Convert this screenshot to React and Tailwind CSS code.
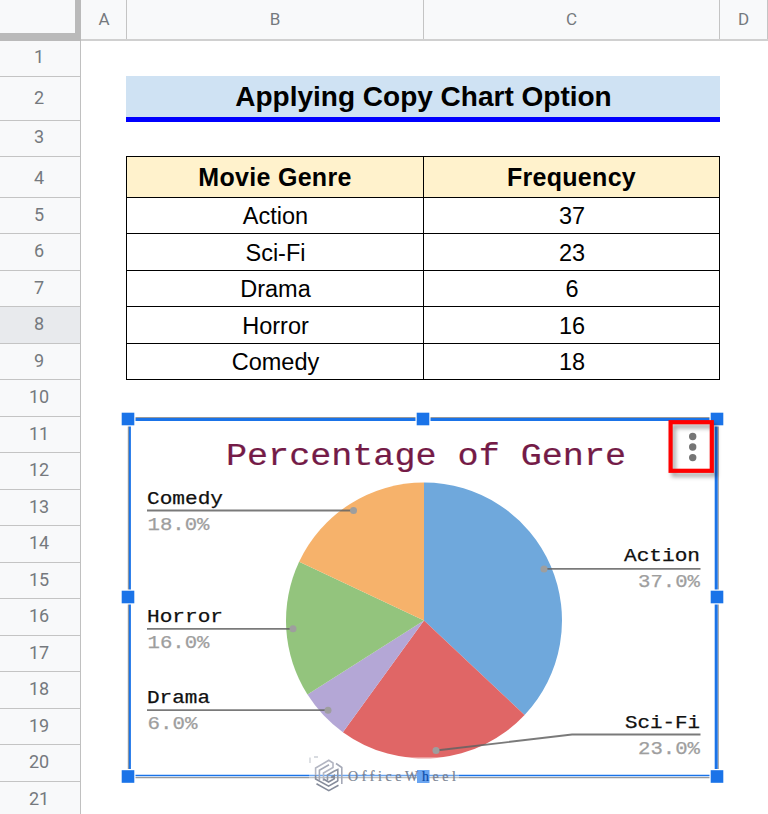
const rowHeights = [36, 44, 36, 41, 36, 37, 36, 37, 36, 37, 36, 37, 36, 37, 36, 37, 36, 37, 36, 37, 36];

const data = [
  ["Action", "37"],
  ["Sci-Fi", "23"],
  ["Drama", "6"],
  ["Horror", "16"],
  ["Comedy", "18"],
];

const bodyHeights = ["h-[36px]", "h-[37px]", "h-[36px]", "h-[37px]", "h-[36px]"];

const slices = [
  { from: 0, to: 37, color: "#6fa8dc" },
  { from: 37, to: 60, color: "#e06666" },
  { from: 60, to: 66, color: "#b4a7d6" },
  { from: 66, to: 82, color: "#93c47d" },
  { from: 82, to: 100, color: "#f6b26b" },
];

const CX = 424;
const CY = 620.5;
const R = 138;

function point(p) {
  const a = (p / 100) * Math.PI * 2;
  return `${CX + R * Math.sin(a)} ${CY - R * Math.cos(a)}`;
}

function slicePath({ from, to }) {
  return `M${CX} ${CY}L${point(from)}A${R} ${R} 0 0 1 ${point(to)}Z`;
}

const labels = [
  { name: "Comedy", pct: "18.0%", x: 147, y: 504, w: 76, pw: 62, line: "147,510.5 353,510.5", dot: [353.5, 510.5] },
  { name: "Horror", pct: "16.0%", x: 147, y: 622, w: 76, pw: 62, line: "147,628.8 293,628.8", dot: [293, 628.8] },
  { name: "Drama", pct: "6.0%", x: 147, y: 703.5, w: 63, pw: 50, line: "147,710.2 328,710.2", dot: [328, 710.2] },
  { name: "Action", pct: "37.0%", end: 701, x: 624, y: 561.5, w: 76, pw: 62, line: "544,568.8 700.5,568.8", dot: [544, 569] },
  { name: "Sci-Fi", pct: "23.0%", end: 701, x: 625, y: 728.5, w: 75, pw: 62, line: "436,750.5 572,734.5 700.5,734.5", dot: [436, 750.5] },
];

const handles = [
  [128, 419], [423, 419], [717, 419],
  [128, 597], [717, 597],
  [128, 776.5], [717, 776.5],
];

function Chart() {
  return (
    <svg className="absolute inset-0 h-[814px] w-[768px]" viewBox="0 0 768 814">
      <rect x="130" y="420" width="586" height="356" fill="#fff" />
      <path d="M129 417.5H717M128.4 419V776M718.2 419V776M129 777.7H717" stroke="#9a9a9a" strokeWidth="1.2" fill="none" />
      <path d="M129 419.6H717" stroke="#1a73e8" strokeWidth="3" />
      <path d="M129.9 419V776" stroke="#1a73e8" strokeWidth="2" />
      <path d="M716.2 419V776" stroke="#1a73e8" strokeWidth="3" />
      <path d="M129 775.5H717" stroke="#1a73e8" strokeWidth="1.4" />

      <text x="226" y="464.5" fontSize="32" textLength="400" lengthAdjust="spacingAndGlyphs" fill="#741b47" stroke="#741b47" strokeWidth="0.2" className="font-['Liberation_Mono',monospace]">Percentage of Genre</text>

      {slices.map((s) => (
        <path key={s.from} d={slicePath(s)} fill={s.color} />
      ))}

      {labels.map((l) => (
        <g key={l.name} className="font-['Liberation_Mono',monospace]" fontSize="18">
          <polyline points={l.line} fill="none" stroke="#636363" strokeOpacity="0.85" strokeWidth="1.8" />
          <circle cx={l.dot[0]} cy={l.dot[1]} r="3.5" fill="#9e9e9e" />
          <text x={l.x} y={l.y - 0.5} textLength={l.w} lengthAdjust="spacingAndGlyphs" fill="#111" stroke="#111" strokeWidth="0.25">{l.name}</text>
          <text x={l.end ? 638 : 147.5} y={l.y + 25.5} textLength={l.pw} lengthAdjust="spacingAndGlyphs" fill="#9e9e9e" stroke="#9e9e9e" strokeWidth="0.25">{l.pct}</text>
        </g>
      ))}

      {handles.map(([x, y]) => (
        <g key={`${x}-${y}`}>
          <rect x={x - 7.5} y={y - 7.5} width="15" height="15" fill="#fff" />
          <rect x={x - 6.3} y={y - 6.3} width="12.6" height="12.6" fill="#1a73e8" />
        </g>
      ))}

      <rect x="309" y="757" width="150" height="37" fill="#fff" opacity="0.35" />
      <path d="M310 763V757.5M314 757H318" stroke="#ccd0d6" strokeWidth="1.3" fill="none" />
      <rect x="417" y="770" width="12.5" height="13" fill="#6aa5f1" />
      <g fill="none" strokeWidth="1.6">
        <path d="M315.6 775V768L328.8 760.3L333 763V767.5L323.5 773V781" stroke="#b3b6c2" />
        <path d="M336 763.5L341.8 767.5V784M319.4 780V770.3L329 764.8" stroke="#a5a9b7" />
        <path d="M337.8 781V769.5L334 771.3L327.5 775V780.5" stroke="#9096a4" />
        <path d="M315.6 775V779L328.6 786.2L338 780.8M316.5 783.8L328.8 790.6L338.5 785.2M323.5 779L328.6 782L334.2 778.8V775.5L331 777.5" stroke="#868c9b" />
      </g>
      <text x="348" y="780.5" fontSize="14" textLength="108" lengthAdjust="spacing" fill="#777f91" stroke="#777f91" strokeWidth="0.2" className="font-['Liberation_Serif',serif]">
        OfficeW<tspan fill="#0e4eaa" stroke="#0e4eaa">h</tspan>eel
      </text>

      <g className="drop-shadow-[3px_4px_2px_rgba(0,0,0,0.35)]">
        <rect x="670.6" y="422.2" width="41.2" height="48.6" fill="none" stroke="#f00" strokeWidth="4.2" />
      </g>
      <g fill="#757575">
        <circle cx="692.7" cy="436.5" r="3.7" />
        <circle cx="692.7" cy="447" r="3.7" />
        <circle cx="692.7" cy="457.6" r="3.7" />
      </g>
    </svg>
  );
}

export default function App() {
  return (
    <div className="relative h-[814px] w-[768px] overflow-hidden bg-white font-['Liberation_Sans',Arial,sans-serif] text-black">
      <div className="flex h-[41px] border-b-2 border-[#d0d0d0] bg-[#f8f9fa] font-[Roboto,sans-serif] text-[17px] text-[#75797e]">
        <div className="h-[41px] w-[81px] shrink-0 border-r-[6px] border-b-8 border-[#bababa] bg-[#f8f9fa]" />
        <div className="flex w-[46px] shrink-0 items-center justify-center border-r border-[#c4c4c4] pl-px">A</div>
        <div className="flex w-[297px] shrink-0 items-center justify-center border-r border-[#c4c4c4]">B</div>
        <div className="flex w-[296px] shrink-0 items-center justify-center border-r border-[#c4c4c4]">C</div>
        <div className="flex w-[48px] shrink-0 items-center justify-center border-r border-[#c4c4c4]">D</div>
      </div>
      <div className="flex">
        <div className="w-[81px] shrink-0 border-r border-[#c0c0c0] font-[Roboto,sans-serif] text-[18px] text-[#75797e]">
          {rowHeights.map((h, i) => (
            <div
              key={i}
              style={{ height: h }}
              className={`flex items-center justify-center border-b border-[#c4c4c4] pr-0.5 leading-none ${i === 7 ? "bg-[#e8eaed]" : "bg-[#f8f9fa]"} ${i === 3 ? "pt-0.5" : i === 1 || i > 3 ? "pb-0.5" : "pb-[3px]"}`}
            >
              {i + 1}
            </div>
          ))}
        </div>
        <div className="ml-[45px] mt-[35px] w-[594px]">
          <div className="flex h-[46px] items-center justify-center border-b-[5px] border-[#0000ff] bg-[#cfe2f3] pl-px text-[28px] font-bold">
            Applying Copy Chart Option
          </div>
          <div className="mt-[34px] border-l border-t border-black">
            <div className="flex h-[41px] bg-[#fff2cc] pb-px text-[25px] font-bold tracking-[0.3px]">
              <div className="-mb-px flex w-[297px] items-center justify-center border-b border-r border-black pt-px">Movie Genre</div>
              <div className="-mb-px flex w-[296px] items-center justify-center border-b border-r border-black pt-px">Frequency</div>
            </div>
            {data.map(([genre, n], i) => (
              <div key={genre} className={`flex text-[23.5px] ${bodyHeights[i]}`}>
                <div className="flex w-[297px] items-center justify-center border-b border-r border-black pl-px pt-[3px]">{genre}</div>
                <div className="flex w-[296px] items-center justify-center border-b border-r border-black pl-px pt-[3px]">{n}</div>
              </div>
            ))}
          </div>
        </div>
      </div>
      <Chart />
    </div>
  );
}
